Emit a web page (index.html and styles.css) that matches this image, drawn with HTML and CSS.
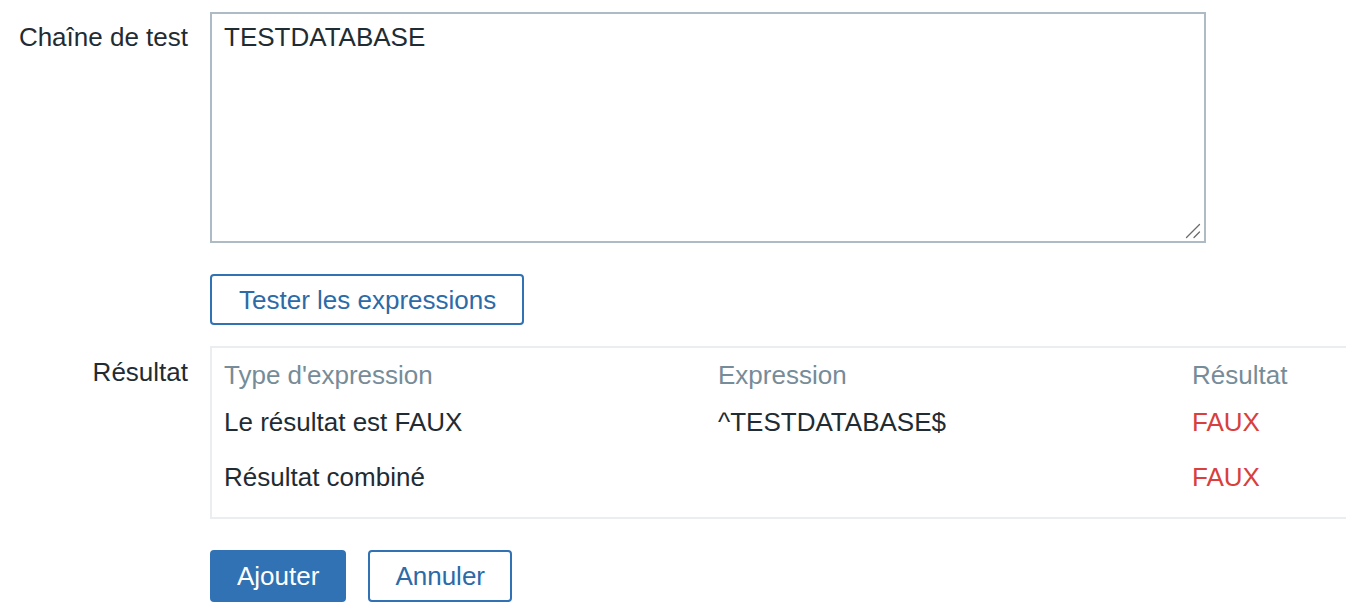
FILE: index.html
```html
<!DOCTYPE html>
<html lang="fr">
<head>
<meta charset="utf-8">
<title>Test</title>
<link rel="stylesheet" href="styles.css">
</head>
<body>
<form class="form">
  <div class="form-row row-test">
    <label class="label" for="ts">Chaîne de test</label>
    <div class="field textarea-wrap">
      <textarea id="ts" class="textarea">TESTDATABASE</textarea>
      <svg class="grip" width="16" height="16" viewBox="0 0 16 16" aria-hidden="true">
        <path d="M1.5 14.5 L14.5 1.5 M9 14.5 L14.5 9" stroke="#6b6b6b" stroke-width="1.3" stroke-linecap="round" fill="none"/>
      </svg>
    </div>
  </div>
  <div class="form-row row-btn">
    <div class="label"></div>
    <div class="field">
      <button type="button" class="btn btn-alt btn-test">Tester les expressions</button>
    </div>
  </div>
  <div class="form-row row-result">
    <div class="label">Résultat</div>
    <div class="field">
      <div class="result-box">
        <table class="result-table">
          <thead>
            <tr><th class="c1">Type d'expression</th><th class="c2">Expression</th><th class="c3">Résultat</th></tr>
          </thead>
          <tbody>
            <tr><td>Le résultat est FAUX</td><td>^TESTDATABASE$</td><td class="red">FAUX</td></tr>
            <tr><td>Résultat combiné</td><td></td><td class="red">FAUX</td></tr>
          </tbody>
        </table>
      </div>
    </div>
  </div>
  <div class="form-row row-actions">
    <div class="label"></div>
    <div class="field actions">
      <button type="button" class="btn btn-primary">Ajouter</button>
      <button type="button" class="btn btn-alt btn-cancel">Annuler</button>
    </div>
  </div>
</form>
</body>
</html>
```
FILE: styles.css
```css
html, body {
  margin: 0;
  padding: 0;
  overflow: hidden;
  background: #ffffff;
}
body {
  font-family: "Liberation Sans", Arial, sans-serif;
  font-size: 26px;
  line-height: 28px;
  color: #1f2c33;
}
.form {
  padding-top: 12px;
}
.form-row {
  display: flex;
  gap: 22px;
  align-items: flex-start;
}
.label {
  flex: 0 0 188px;
  width: 188px;
  text-align: right;
  padding-top: 11px;
  box-sizing: border-box;
  white-space: nowrap;
}
.field {
  flex: 0 0 auto;
}
.textarea-wrap {
  position: relative;
}
.textarea {
  display: block;
  box-sizing: border-box;
  width: 996px;
  height: 231px;
  border: 2px solid #acbbc4;
  border-radius: 0;
  padding: 9px 12px;
  margin: 0;
  font-family: "Liberation Sans", Arial, sans-serif;
  font-size: 26px;
  line-height: 28px;
  color: #1f2c33;
  background: #fff;
  resize: none;
  outline: none;
}
.grip {
  position: absolute;
  right: 5px;
  bottom: 4px;
}
.row-btn {
  margin-top: 31px;
}
.btn {
  box-sizing: border-box;
  height: 51px;
  padding: 0 25px;
  font-family: "Liberation Sans", Arial, sans-serif;
  font-size: 26px;
  line-height: 28px;
  border-radius: 4px;
  border: 2px solid #3072b3;
  cursor: pointer;
  margin: 0;
}
.btn-test {
  padding: 0 26px 0 27px;
}
.btn-alt {
  background: #ffffff;
  color: #2c6aa8;
}
.btn-primary {
  background: #3072b3;
  color: #ffffff;
  height: 52px;
}
.btn-cancel {
  height: 52px;
}
.row-result {
  margin-top: 21px;
}
.row-result .label {
  padding-top: 12px;
}
.result-box {
  box-sizing: border-box;
  width: 1200px;
  border: 2px solid #ebeef0;
  padding: 0 12px 12px;
}
.result-table {
  border-collapse: collapse;
}
.result-table th {
  font-weight: normal;
  text-align: left;
  color: #768c98;
  padding: 13px 0 6px;
}
.result-table td {
  text-align: left;
  padding: 13px 0 14px;
  height: 28px;
}
.c1 { width: 494px; }
.c2 { width: 474px; }
.c3 { width: 200px; }
.red {
  color: #d8403d;
}
.row-actions {
  margin-top: 31px;
}
.actions {
  display: flex;
  gap: 22px;
}
```
